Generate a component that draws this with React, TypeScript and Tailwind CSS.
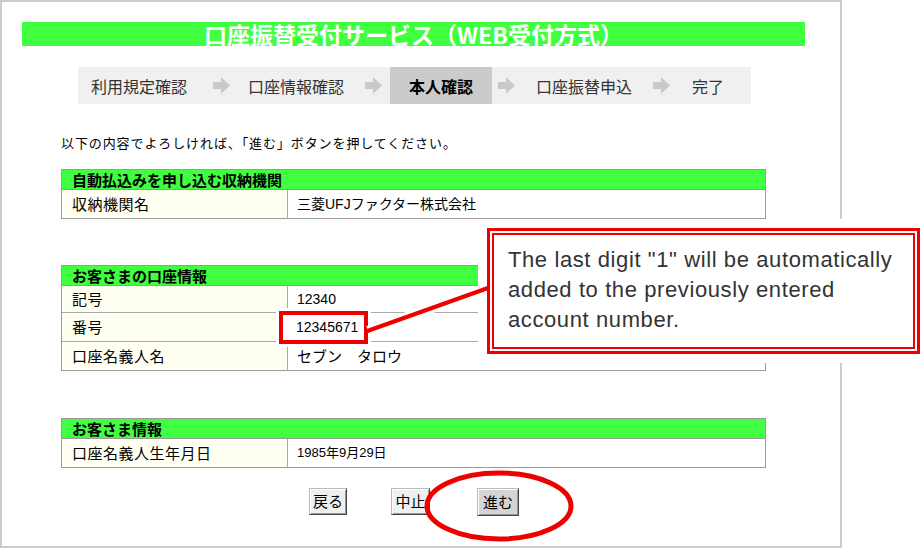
import React from "react";

const jp = "font-['Noto_Sans_CJK_JP',sans-serif]";
const val = "font-['Liberation_Sans','Noto_Sans_CJK_JP',sans-serif]";

function Arrow({ className }: { className: string }) {
  return (
    <svg width="17" height="17" viewBox="0 0 17 17" className={"shrink-0 " + className}>
      <path d="M0 5H8V0L17 8.5L8 17V12H0Z" fill="#c9c9c9" />
    </svg>
  );
}

type Row = { label: string; value: React.ReactNode; h: string; last?: boolean };

function Table({ title, rows, className }: { title: string; rows: Row[]; className: string }) {
  return (
    <div className={"ml-[59px] w-[705px] border border-[#9a9a9a] " + className}>
      <div className={"h-[20px] border-b border-[#9a9a9a] bg-[#40ff40] pl-[10px] text-[15px] font-bold leading-[20px] text-black " + jp}>
        {title}
      </div>
      {rows.map((r, i) => (
        <div
          key={i}
          className={
            "flex " + r.h + (r.last ? "" : " border-b border-[#aaaaaa]")
          }
        >
          <div className={"flex w-[226px] shrink-0 items-center border-r border-[#aaaaaa] bg-[#fffff2] pl-[10px] text-[15px] tracking-[0.5px] text-black " + jp}>
            {r.label}
          </div>
          <div className={"relative flex flex-1 items-center pl-[9px] text-[14px] text-black " + val}>
            {r.value}
          </div>
        </div>
      ))}
    </div>
  );
}

function Btn({ label, className }: { label: string; className: string }) {
  return (
    <div
      className={
        "flex items-center justify-center border border-b-[#444] border-l-[#bbb] border-r-[#444] border-t-[#bbb] shadow-[inset_1px_1px_0_#fff,inset_-1px_-1px_0_#999] text-[15px] text-black " +
        jp +
        " " +
        className
      }
    >
      {label}
    </div>
  );
}

export default function App() {
  return (
    <div className="relative h-[548px] w-[920px] overflow-hidden bg-white">
      <div className="flex h-[548px] w-[842px] flex-col border-2 border-[#cccccc] bg-white">
        {/* Title bar */}
        <div className={"ml-[20px] mt-[20px] flex h-[24px] w-[783px] items-center justify-center bg-[#40ff40] text-[23px] font-bold leading-[24px] text-white " + jp}>
          口座振替受付サービス（WEB受付方式）
        </div>

        {/* Steps */}
        <div className={"ml-[76px] mt-[21px] flex h-[37px] w-[673px] items-center whitespace-nowrap bg-[#f0f0f0] text-[16px] text-[#333] " + jp}>
          <span className="ml-[13px] w-[97px]">利用規定確認</span>
          <Arrow className="ml-[25px]" />
          <span className="ml-[18px] w-[97px]">口座情報確認</span>
          <Arrow className="ml-[20px]" />
          <div className="ml-[8px] flex h-full w-[102px] items-center justify-center bg-[#cbcbcb] font-bold text-black">
            本人確認
          </div>
          <Arrow className="ml-[6px]" />
          <span className="ml-[21px] w-[97px]">口座振替申込</span>
          <Arrow className="ml-[20px]" />
          <span className="ml-[22px]">完了</span>
        </div>

        {/* Instruction */}
        <div className={"ml-[59px] mt-[30px] h-[18px] text-[13px] leading-[18px] tracking-[0.9px] text-black " + jp}>
          以下の内容でよろしければ、「進む」ボタンを押してください。
        </div>

        <Table
          className="mt-[17px]"
          title="自動払込みを申し込む収納機関"
          rows={[{ label: "収納機関名", value: "三菱UFJファクター株式会社", h: "h-[28px]", last: true }]}
        />

        <Table
          className="mt-[46px]"
          title="お客さまの口座情報"
          rows={[
            { label: "記号", value: "12340", h: "h-[27px]" },
            {
              label: "番号",
              h: "h-[29px]",
              value: (
                <div className="absolute left-[-9px] top-[-2px] flex h-[33px] w-[89px] items-center border-4 border-[#ee0000] bg-white pl-[13px] shadow-[0_0_0_3px_#fff]">
                  12345671
                </div>
              ),
            },
            { label: "口座名義人名", value: <span className={jp + " text-[15px]"}>セブン　タロウ</span>, h: "h-[28px]", last: true },
          ]}
        />

        <Table
          className="mt-[47px]"
          title="お客さま情報"
          rows={[{ label: "口座名義人生年月日", value: <span className="text-[13px]">1985年9月29日</span>, h: "h-[28px]", last: true }]}
        />

        {/* Buttons */}
        <div className="mt-[20px] flex items-start">
          <Btn label="戻る" className="ml-[307px] h-[27px] w-[38px] bg-[#f0f0f0]" />
          <Btn label="中止" className="ml-[44px] h-[27px] w-[39px] bg-[#f0f0f0]" />
          <Btn label="進む" className="ml-[47px] h-[28px] w-[42px] bg-[#d4d4d4]" />
        </div>
      </div>

      {/* Callout */}
      <div className="absolute left-[478px] top-[219px] bg-white p-[9px]">
        <div className="h-[126px] w-[433px] border-[3px] border-[#ee0000] p-[2px]">
          <div className="h-full w-full whitespace-nowrap border-2 border-[#ee0000] pl-[14px] pt-[10px] font-['Liberation_Sans',Arial,sans-serif] text-[22px] leading-[30px] tracking-[0.6px] text-[#333]">
            The last digit "1" will be automatically
            <br />
            added to the previously entered
            <br />
            account number.
          </div>
        </div>
      </div>

      {/* Connector line */}
      <svg className="absolute left-[360px] top-[278px]" width="130" height="62" viewBox="0 0 130 62">
        <line x1="8" y1="53" x2="125" y2="11" stroke="#ffffff" strokeWidth="10" />
        <line x1="6" y1="53.5" x2="128" y2="10" stroke="#ee0000" strokeWidth="4" />
      </svg>

      {/* Ellipse */}
      <svg className="absolute left-[424px] top-[470px]" width="152" height="72" viewBox="0 0 152 72">
        <ellipse cx="75" cy="36" rx="72" ry="33" fill="none" stroke="#ee0000" strokeWidth="5" />
      </svg>
    </div>
  );
}
